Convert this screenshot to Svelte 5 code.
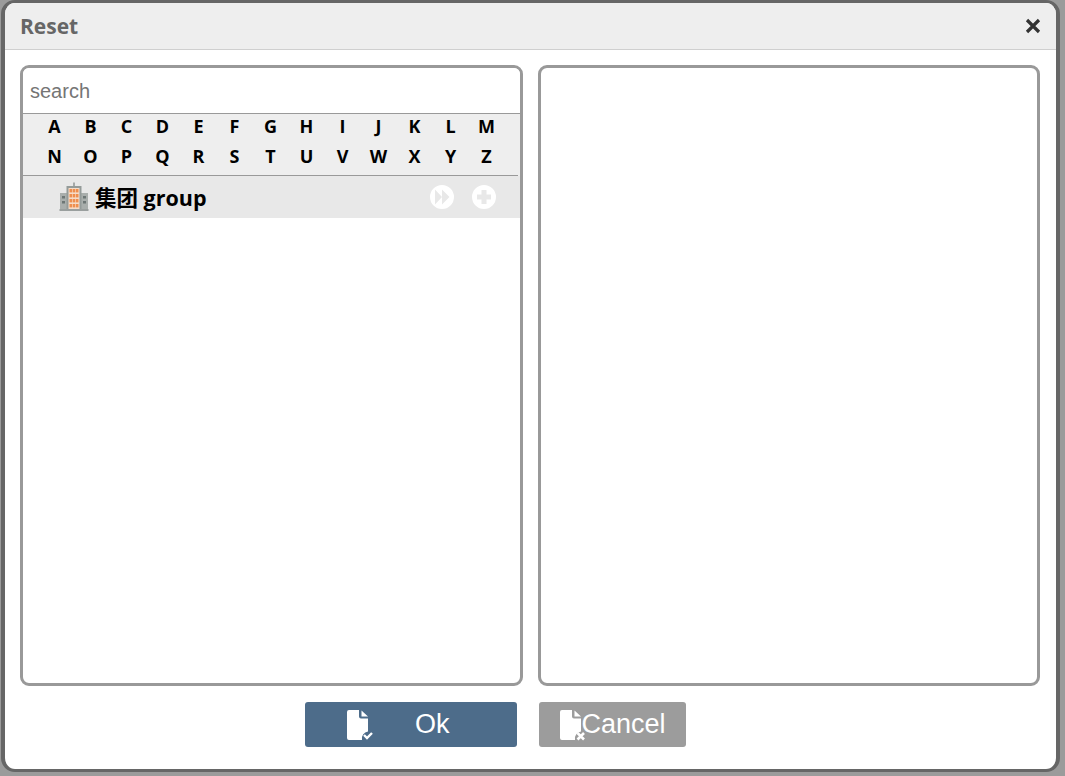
<script lang="ts">
	const letters = "ABCDEFGHIJKLMNOPQRSTUVWXYZ".split("");
	let search = $state("");
</script>

<div class="page">
	<div class="dialog">
		<div class="dialog-header">
			<span class="dialog-title">Reset</span>
			<button type="button" class="close-btn" aria-label="Close">
				<svg width="18" height="18" viewBox="0 0 18 18"><path d="M3 3 L15 15 M15 3 L3 15" stroke="#333" stroke-width="3.2" fill="none" /></svg>
			</button>
		</div>

		<div class="dialog-body">
			<div class="panel">
				<input class="search" type="text" placeholder="search" bind:value={search} />
				<div class="letters">
					{#each letters as letter}
						<span class="letter">{letter}</span>
					{/each}
				</div>
				<div class="tree-row">
					<svg class="org-icon" width="30" height="30" viewBox="0 0 30 30">
						<rect x="14" y="0.5" width="2" height="4" fill="#a5a9a8" />
						<rect x="1" y="11" width="8" height="16" fill="#a9aeac" />
						<rect x="21" y="11" width="8" height="16" fill="#a9aeac" />
						<rect x="7.5" y="4" width="15" height="24" fill="#949b99" />
						<rect x="9.5" y="6" width="11" height="21" fill="#f6dcc8" />
						<g fill="#ef8f4e">
							<rect x="10.5" y="7" width="2.6" height="3.4" /><rect x="13.7" y="7" width="2.6" height="3.4" /><rect x="16.9" y="7" width="2.6" height="3.4" />
							<rect x="10.5" y="12" width="2.6" height="3.4" /><rect x="13.7" y="12" width="2.6" height="3.4" /><rect x="16.9" y="12" width="2.6" height="3.4" />
							<rect x="10.5" y="17" width="2.6" height="3.4" /><rect x="13.7" y="17" width="2.6" height="3.4" /><rect x="16.9" y="17" width="2.6" height="3.4" />
							<rect x="10.5" y="22" width="2.6" height="3.4" /><rect x="13.7" y="22" width="2.6" height="3.4" /><rect x="16.9" y="22" width="2.6" height="3.4" />
						</g>
						<g fill="#6d7675">
							<rect x="3" y="14" width="3" height="2.5" /><rect x="3" y="19" width="3" height="2.5" />
							<rect x="24" y="14" width="3" height="2.5" /><rect x="24" y="19" width="3" height="2.5" />
						</g>
						<rect x="0.5" y="27" width="29" height="2" fill="#9a9f9e" />
					</svg>
					<span class="tree-label">集团 group</span>
					<span class="tree-actions">
						<svg width="24" height="24" viewBox="0 0 24 24">
							<path fill="#fff" fill-rule="evenodd" d="M12 0a12 12 0 1 0 0 24a12 12 0 1 0 0-24z M5 4.500 L12 12 L5 19.500z M12 4.500 L19.500 12 L12 19.500z" />
						</svg>
						<svg width="24" height="24" viewBox="0 0 24 24">
							<path fill="#fff" fill-rule="evenodd" d="M12 0a12 12 0 1 0 0 24a12 12 0 1 0 0-24z M9.500 5h5v4.500h4.500v5h-4.500v4.500h-5v-4.500h-4.500v-5h4.500z" />
						</svg>
					</span>
				</div>
			</div>
			<div class="panel"></div>
		</div>

		<div class="dialog-footer">
			<button type="button" class="btn btn-ok">
				<svg class="file-icon" width="28" height="32" viewBox="0 0 28 32">
					<path fill="#fff" d="M3 1h10v6.500a2 2 0 0 0 2 2h7v13a7 7 0 0 0-6 8.500H3a2 2 0 0 1-2-2V3a2 2 0 0 1 2-2z M15.500 1.500l6.500 6h-6.500z" />
					<path fill="none" stroke="#fff" stroke-width="2.400" d="M18 26l3 3l5-5" />
				</svg>
				<span class="ok-text">Ok</span>
			</button>
			<button type="button" class="btn btn-cancel">
				<svg class="file-icon" width="28" height="32" viewBox="0 0 28 32">
					<path fill="#fff" d="M3 1h10v6.500a2 2 0 0 0 2 2h7v13a7 7 0 0 0-6 8.500H3a2 2 0 0 1-2-2V3a2 2 0 0 1 2-2z M15.500 1.500l6.500 6h-6.500z" />
					<path fill="none" stroke="#fff" stroke-width="2.600" d="M18.500 24l6.500 6.500 M25 24l-6.500 6.500" />
				</svg>
				<span class="cancel-text">Cancel</span>
			</button>
		</div>
	</div>
</div>

<style>
	:global(body) {
		margin: 0;
		background: #9b9b9b;
	}

	.page {
		width: 1065px;
		height: 776px;
		overflow: hidden;
		padding-left: 1px;
		box-sizing: border-box;
	}

	.dialog {
		width: 1059px;
		height: 772px;
		box-sizing: border-box;
		background: #fff;
		border: 4px solid #666;
		border-top-width: 3px;
		border-bottom-width: 3px;
		border-radius: 14px;
		overflow: hidden;
		display: flex;
		flex-direction: column;
	}

	.dialog-header {
		height: 46px;
		flex: none;
		display: flex;
		align-items: center;
		justify-content: space-between;
		padding: 0 14px 0 15px;
		background: #eeeeee;
		border-bottom: 1px solid #cfcfcf;
	}

	.dialog-title {
		font-family: "Open Sans", sans-serif;
		font-size: 21px;
		font-weight: 700;
		color: #666;
	}

	.close-btn {
		background: none;
		border: none;
		padding: 0;
		width: 18px;
		height: 18px;
		display: flex;
	}

	.dialog-body {
		display: flex;
		gap: 15px;
		padding: 15px 16px 0 15px;
	}

	.panel {
		width: 503px;
		height: 621px;
		box-sizing: border-box;
		border: 3px solid #999;
		border-radius: 9px;
		background: #fff;
		display: flex;
		flex-direction: column;
		overflow: hidden;
	}

	.panel + .panel {
		width: 502px;
	}

	.search {
		height: 45px;
		flex: none;
		box-sizing: border-box;
		border: none;
		outline: none;
		padding: 2px 7px 0;
		font-family: "Liberation Sans", Arial, sans-serif;
		font-size: 20px;
		background: #fff;
	}

	.search::placeholder {
		color: #757575;
		opacity: 1;
	}

	.letters {
		height: 63px;
		flex: none;
		box-sizing: border-box;
		background: #eeeeee;
		border-top: 1px solid #999;
		display: grid;
		grid-template-columns: repeat(13, 36px);
		grid-auto-rows: 30px;
		padding: 0 0 0 13.5px;
		font-family: "Open Sans", sans-serif;
		font-size: 18px;
		font-weight: 700;
		color: #000;
		position: relative;
	}

	.letters::after {
		content: "";
		position: absolute;
		left: 0;
		right: 2px;
		bottom: 0;
		height: 1px;
		background: #999;
	}

	.letter {
		display: flex;
		align-items: center;
		justify-content: center;
		height: 24px;
	}

	.tree-row {
		height: 42px;
		flex: none;
		display: flex;
		align-items: center;
		background: #e8e8e8;
		padding-left: 36px;
	}

	.org-icon {
		flex: none;
	}

	.tree-label {
		margin-left: 6px;
		margin-top: -2px;
		font-family: "Open Sans", "Noto Sans CJK SC", sans-serif;
		font-size: 21.5px;
		font-weight: 700;
		color: #000;
	}

	.tree-actions {
		margin-left: auto;
		margin-right: 24px;
		display: flex;
		gap: 18px;
	}

	.dialog-footer {
		display: flex;
		gap: 22px;
		padding: 16px 0 0 300px;
	}

	.btn {
		height: 45px;
		border: none;
		border-radius: 3px;
		color: #fff;
		font-family: "Liberation Sans", Arial, sans-serif;
		font-size: 27px;
		display: flex;
		align-items: center;
		padding: 0;
		box-sizing: border-box;
	}

	.btn-ok {
		width: 212px;
		background: #4d6c8a;
		padding-left: 41px;
	}

	.btn-cancel {
		width: 147px;
		background: #9c9c9c;
		padding-left: 20px;
	}

	.file-icon {
		flex: none;
	}

	.ok-text {
		margin-left: 41px;
	}

	.cancel-text {
		margin-left: -5.5px;
	}
</style>
